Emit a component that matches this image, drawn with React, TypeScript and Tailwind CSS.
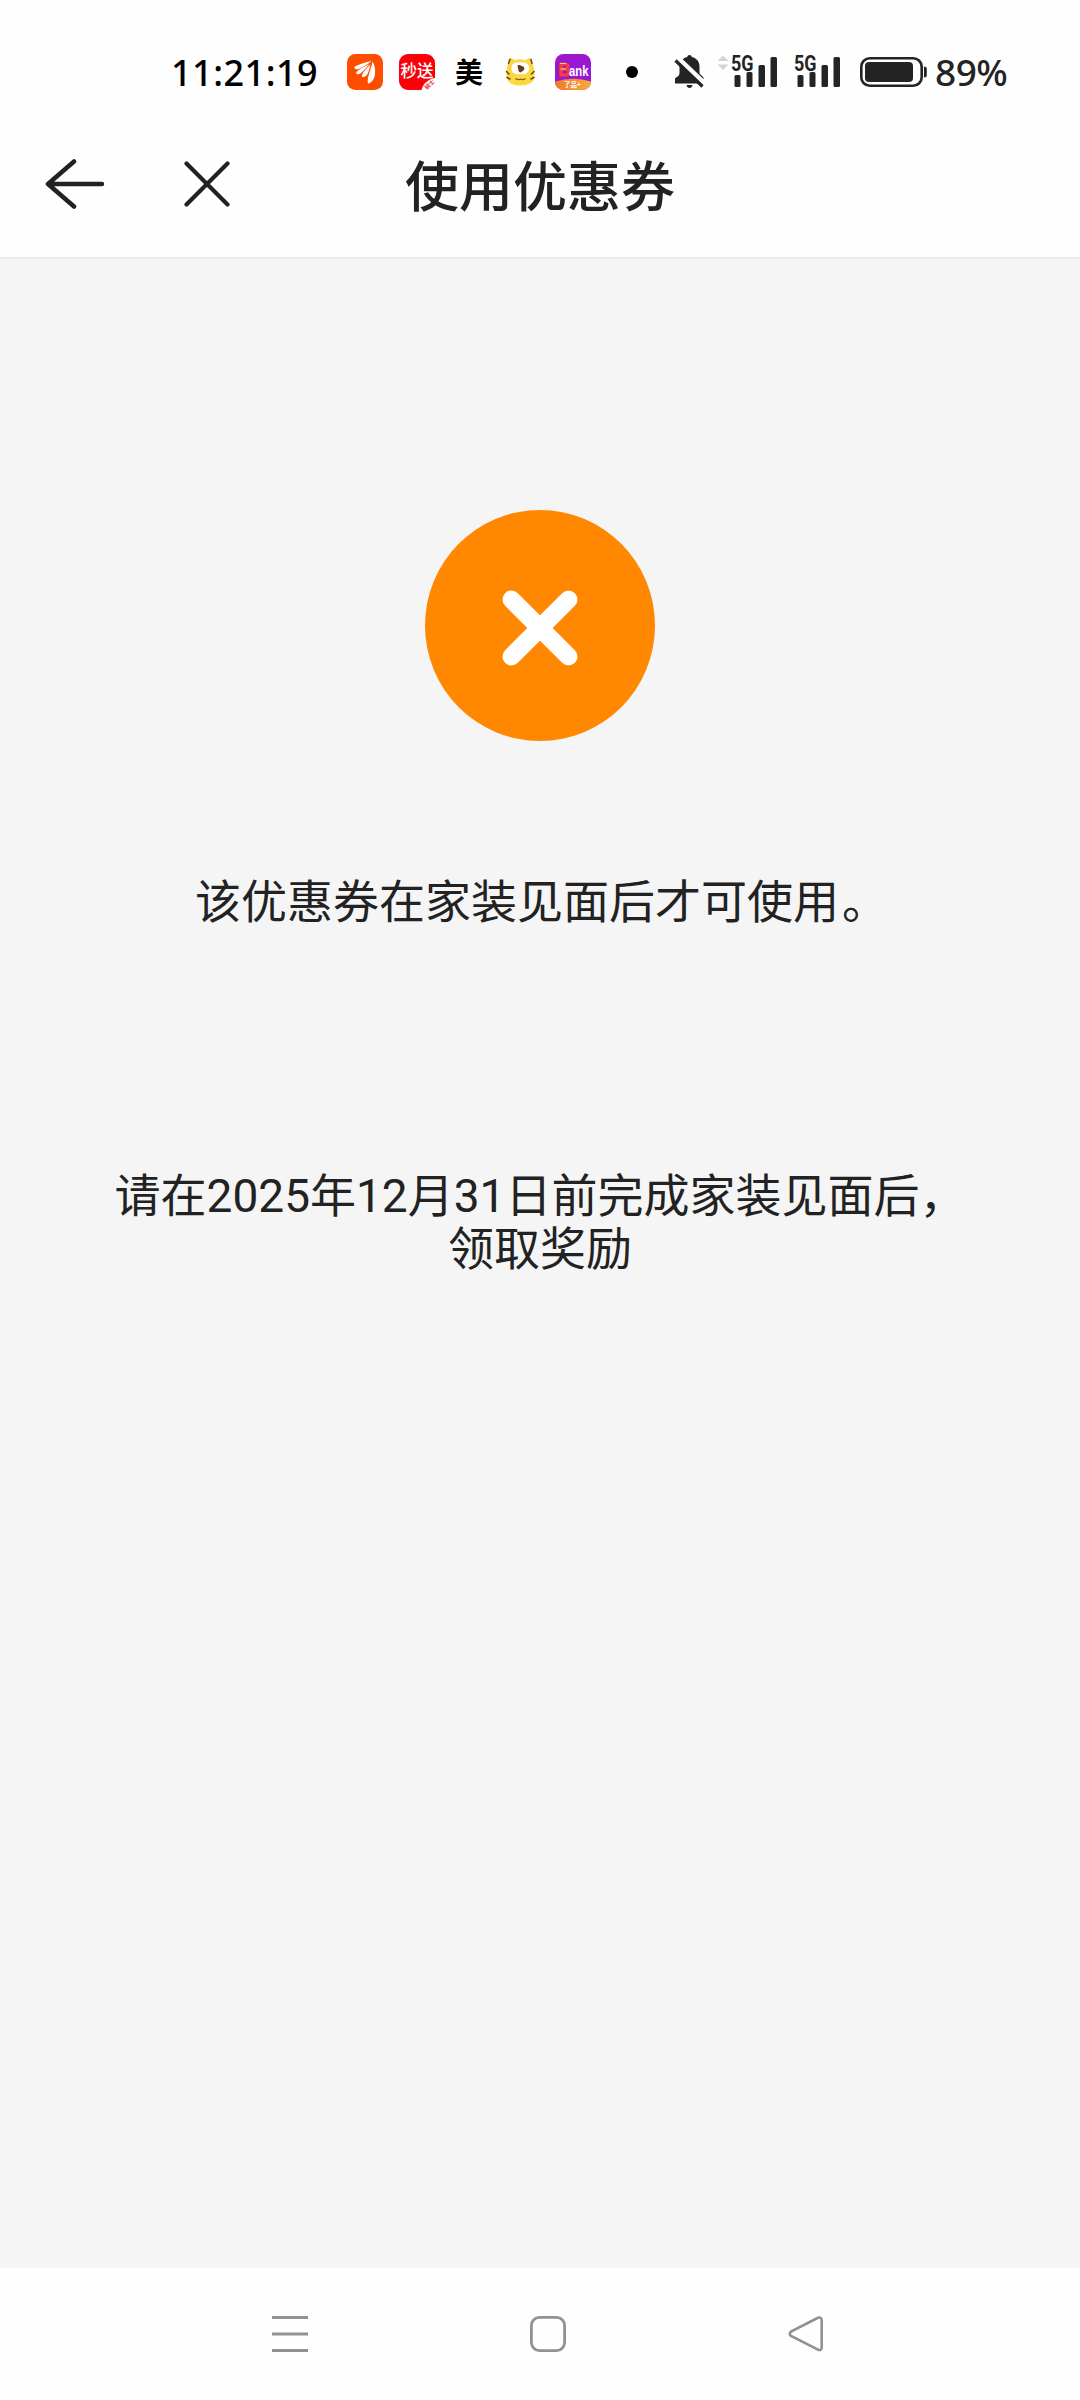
const StatusBar = () => {
  return (
    <div className="flex h-[112px] items-start pt-[50px] pl-[171px] font-['Noto_Sans','Noto_Sans_CJK_SC',sans-serif]">
      <p className="h-11 w-[176px] text-[36px] leading-[46px] font-medium tracking-[0.5px] text-black">
        11:21:19
      </p>
      <div className="flex h-11 items-center gap-4">
        <FeatherAppIcon />
        <FlashSaleAppIcon />
        <span className="mr-1 ml-1 text-[28px] leading-none font-bold text-black">
          美
        </span>
        <TigerIcon />
        <BankAppIcon />
      </div>
      <span className="mt-4 ml-[35px] h-3 w-3 rounded-full bg-black" />
      <div className="ml-9 flex h-11 items-center text-[#242424]">
        <BellOffIcon />
        <svg width="12" height="44" viewBox="0 0 12 44" className="ml-3">
          <path d="M0.5 11 6 5.5 11.5 11ZM0.5 14.5H11.5L6 20Z" fill="#d3d3d3" />
        </svg>
        <Signal className="ml-0.5" />
        <Signal className="ml-[15px]" />
        <Battery />
        <p className="ml-2 text-[37px] leading-[46px] font-medium tracking-[-0.5px]">
          89%
        </p>
      </div>
    </div>
  );
};

const FeatherAppIcon = () => (
  <svg width="36" height="36" viewBox="0 0 36 36">
    <rect width="36" height="36" rx="8.5" fill="#ff4d00" />
    <g fill="#fff">
      <path d="M24.500 7C19 8 11 10.500 7.300 13c.3 2.400 2.500 2.800 4.500 2 4.500-2 8-4 12.700-8Z" />
      <path d="M22.500 10C17 13 10 16 9 19c.8 2 3.500 1.500 5.500-.5 4-3.500 5.500-5.500 8-8.500Z" />
      <path d="M23.500 10.500C20 14 14.500 19 15 22.500c1.500 1.500 4 0 5.500-2.500 1.500-3 2-5.500 3-9.500Z" />
      <path d="M25.500 7.500C25 14 19.500 23 21 29.500c3.500-.5 6-4 6.800-8.500.8-5 .2-9.500-2.300-13.500Z" />
    </g>
  </svg>
);

const FlashSaleAppIcon = () => (
  <svg width="36" height="36" viewBox="0 0 36 36" className="overflow-visible">
    <path
      d="M9 0H27A9 9 0 0 1 36 9V24C29 25 24 30 22.500 36H9A9 9 0 0 1 0 27V9A9 9 0 0 1 9 0Z"
      fill="#fb0009"
    />
    <text
      x="1.500"
      y="22.500"
      fontSize="16.500"
      fontWeight="500"
      fill="#fff"
      fontFamily="Noto Sans CJK SC, sans-serif"
    >
      秒送
    </text>
    <text
      x="28"
      y="36"
      fontSize="5.500"
      fontWeight="700"
      fill="#e0303a"
      transform="rotate(-45 28 36)"
      fontFamily="Noto Sans CJK SC, sans-serif"
    >
      骑士
    </text>
  </svg>
);

const TigerIcon = () => (
  <svg width="36" height="36" viewBox="0 0 36 36">
    <path
      d="M5.500 9C4.500 4.500 6.500 3 9 4.500L12 6.200Q17 4.500 22 6.200L25.500 4.500C28 3 29.500 4.500 29 9Q32 14 31.500 23Q30 31.500 17.500 31.500T3.500 23Q3 14 5.500 9Z"
      fill="#fbd83b"
    />
    <path
      d="M5.500 9.500 7 5.500M29 9.500 28 5.500M3.500 17.500l2.500 2.500M4 23.500l3 1.500M31 17.500l-2.500 2.500M31 23.500l-3 1.500"
      stroke="#6b4a20"
      strokeWidth="1.500"
      strokeLinecap="round"
    />
    <rect x="8" y="8" width="18.500" height="12.500" rx="6.200" fill="#fff" stroke="#ecd06a" strokeWidth="0.600" />
    <path d="M14.500 12Q14.500 10.500 16.500 11L21 13Q22 14.500 20.500 16.500L17.500 18.500Q16 18.500 15.500 16.500Z" fill="#6a3d1f" />
    <path d="M12.500 24.500Q15 26.500 17.500 25Q20 26.500 22.500 24.500" fill="none" stroke="#8a5b20" strokeWidth="1.200" />
  </svg>
);

const BankAppIcon = () => (
  <svg
    width="36"
    height="36"
    viewBox="0 0 36 36"
    className="overflow-visible"
    fontFamily="Liberation Sans, Noto Sans CJK SC, sans-serif"
    fontWeight="700"
  >
    <defs>
      <linearGradient id="bank-orange">
        <stop offset="0" stopColor="#f07a2a" />
        <stop offset="1" stopColor="#fba93c" />
      </linearGradient>
    </defs>
    <rect width="36" height="36" rx="8.500" fill="#9a18cf" />
    <path d="M0 27.500Q18 22 36 27.500A8.500 8.500 0 0 1 27.500 36H8.500A8.500 8.500 0 0 1 0 27.500Z" fill="url(#bank-orange)" />
    <text x="3.500" y="22" fontSize="19" textLength="11.500" lengthAdjust="spacingAndGlyphs" fill="#f5402f" stroke="#f5402f" strokeWidth="1">
      B
    </text>
    <path d="M5 9.500H11M5.500 15H11" stroke="#ffc9a0" strokeWidth="1.200" />
    <text x="14" y="22" fontSize="14" textLength="19.500" lengthAdjust="spacingAndGlyphs" fill="#fff">
      ank
    </text>
    <text x="9" y="33" fontSize="6.500" fill="#fff">
      了品+
    </text>
  </svg>
);

const BellOffIcon = () => (
  <svg width="31" height="44" viewBox="0 0 31 44" fill="currentColor">
    <path d="M15.500 5a2.500 2.500 0 0 1 2.400 2C22.500 8 25.500 11.500 25.500 16.500V23.500L29.500 27.500V33.500H1V29C1 27 5.500 27 5.500 23V16.500C5.500 11.500 8.500 8 13.100 7a2.500 2.500 0 0 1 2.400-2Z" />
    <path d="M12.500 35H18.500Q18 38 15.500 38T12.500 35Z" />
    <path d="M4 8 32 34.500" stroke="#fff" strokeWidth="4.500" />
    <path d="M1.500 10.500 28.500 36.500" stroke="currentColor" strokeWidth="3.200" />
  </svg>
);

const Signal = ({ className }: { className: string }) => (
  <svg width="48" height="44" viewBox="0 0 48 44" fill="currentColor" className={className}>
    <text
      x="0"
      y="20.500"
      fontSize="22"
      fontWeight="700"
      textLength="22.500"
      lengthAdjust="spacingAndGlyphs"
      fontFamily="Roboto, sans-serif"
    >
      5G
    </text>
    <rect x="3.500" y="25" width="6" height="12" rx="1.500" />
    <rect x="15.500" y="22" width="6" height="15" rx="1.500" />
    <rect x="27.500" y="15" width="6.500" height="22" rx="1.500" />
    <rect x="39.500" y="7" width="6.500" height="30" rx="1.500" />
  </svg>
);

const Battery = () => (
  <svg width="67" height="44" viewBox="0 0 67 44" fill="currentColor" className="ml-[18px]">
    <rect x="1.300" y="8.300" width="60.400" height="27.400" rx="8.500" fill="none" stroke="currentColor" strokeWidth="2.600" />
    <rect x="5" y="12" width="48" height="20" rx="4" />
    <path d="M64 16.500Q66.800 16.500 66.800 19V25Q66.800 27.500 64 27.500Z" />
  </svg>
);

const Header = () => (
  <div className="relative flex h-[145px] items-start pt-11 pl-[45px]">
    <svg width="60" height="56" viewBox="0 0 60 56" fill="none" stroke="#222" strokeWidth="4.500" strokeLinecap="round" strokeLinejoin="round">
      <path d="M29 5.500 3 28 29 50.500M3 28H57" />
    </svg>
    <svg width="46" height="56" viewBox="0 0 46 56" fill="none" stroke="#222" strokeWidth="4.200" strokeLinecap="round" className="ml-[79px]">
      <path d="M2.500 7.500 43.500 48.500M43.500 7.500 2.500 48.500" />
    </svg>
    <h1 className="absolute inset-x-0 top-[37px] text-center text-[54px] leading-[80px] font-medium text-[#222]">
      使用优惠券
    </h1>
  </div>
);

const NavigationBar = () => (
  <div className="flex h-[132px] pt-12 pl-[272px]">
    <svg width="36" height="36" viewBox="0 0 36 36" stroke="#919191" strokeWidth="3">
      <path d="M0 1.500H36M0 18H36M0 34.500H36" />
    </svg>
    <svg width="36" height="36" viewBox="0 0 36 36" fill="none" stroke="#919191" strokeWidth="2.800" className="ml-[222px]">
      <rect x="1.400" y="1.400" width="33.200" height="33.200" rx="8" />
    </svg>
    <svg width="36" height="36" viewBox="0 0 36 36" fill="none" stroke="#919191" strokeWidth="2.600" className="ml-[222px]">
      <path d="M29.500 2C32 0.800 33.700 2 33.700 4.500V31.500C33.700 34 32 34.800 29.500 33.300L3 20Q0.500 18 3 15.500Z" />
    </svg>
  </div>
);

export default function App() {
  return (
    <div className="flex h-[2400px] w-[1080px] flex-col overflow-hidden bg-[#fefefe] font-['Roboto','Noto_Sans_CJK_SC',sans-serif]">
      <StatusBar />
      <Header />
      <main className="flex flex-1 flex-col items-center border-t-2 border-[#ececec] bg-[#f5f5f5] pt-[251px] text-center text-[46px] leading-[53px] text-[#222]">
        <svg width="230" height="231" viewBox="0 0 230 231">
          <ellipse cx="115" cy="115.500" rx="115" ry="115.500" fill="#ff8800" />
          <path d="M86.500 89.500 143.500 146.500M143.500 89.500 86.500 146.500" stroke="#fff" strokeWidth="18" strokeLinecap="round" />
        </svg>
        <p className="mt-[135px]">
          该优惠券在家装见面后才可使用<span className="relative left-[3px]">。</span>
        </p>
        <p className="mt-[241px]">
          请在2025年12月31日前完成家装见面后，
          <br />
          领取奖励
        </p>
      </main>
      <NavigationBar />
    </div>
  );
}
